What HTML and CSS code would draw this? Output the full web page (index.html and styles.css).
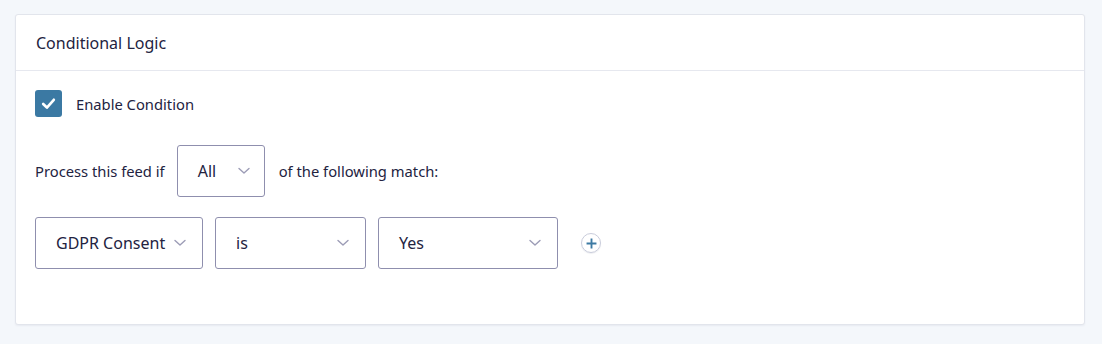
FILE: index.html
```html
<!DOCTYPE html>
<html>
<head>
<meta charset="utf-8">
<link rel="stylesheet" href="styles.css">
</head>
<body>
<div class="card">
  <div class="card-header">Conditional Logic</div>
  <div class="card-body">
    <label class="check-row">
      <span class="checkbox">
        <svg width="17" height="17" viewBox="0 0 16 16"><path d="M3 8.5 L6.5 11.8 L13 4.5" fill="none" stroke="#fff" stroke-width="2.5" stroke-linecap="round" stroke-linejoin="round"/></svg>
      </span>
      <span class="check-label">Enable Condition</span>
    </label>
    <div class="process-row">
      <span>Process this feed if</span>
      <div class="select sel-all"><span>All</span><svg class="chev" width="12" height="8" viewBox="0 0 12 8"><path d="M1 1.5 L6 6 L11 1.5" fill="none" stroke="#9c9cb6" stroke-width="1.4" stroke-linecap="round" stroke-linejoin="round"/></svg></div>
      <span>of the following match:</span>
    </div>
    <div class="rule-row">
      <div class="select sel-field"><span>GDPR Consent</span><svg class="chev" width="12" height="8" viewBox="0 0 12 8"><path d="M1 1.5 L6 6 L11 1.5" fill="none" stroke="#9c9cb6" stroke-width="1.4" stroke-linecap="round" stroke-linejoin="round"/></svg></div>
      <div class="select sel-op"><span>is</span><svg class="chev" width="12" height="8" viewBox="0 0 12 8"><path d="M1 1.5 L6 6 L11 1.5" fill="none" stroke="#9c9cb6" stroke-width="1.4" stroke-linecap="round" stroke-linejoin="round"/></svg></div>
      <div class="select sel-val"><span>Yes</span><svg class="chev" width="12" height="8" viewBox="0 0 12 8"><path d="M1 1.5 L6 6 L11 1.5" fill="none" stroke="#9c9cb6" stroke-width="1.4" stroke-linecap="round" stroke-linejoin="round"/></svg></div>
      <span class="add-btn">
        <svg width="11" height="11" viewBox="0 0 10 10"><path d="M5 0.5 V9.5 M0.5 5 H9.5" stroke="#3d7aa3" stroke-width="1.7"/></svg>
      </span>
    </div>
  </div>
</div>
</body>
</html>
```

FILE: styles.css
```css
html, body {
  margin: 0;
  padding: 0;
}
body {
  background: #f4f7fb;
  font-family: "Noto Sans", "Open Sans", sans-serif;
  color: #23233f;
  padding: 14px 17px 0 15px;
  height: 344px;
  box-sizing: border-box;
}
.card {
  background: #fff;
  border: 1px solid #e2e5ec;
  border-radius: 3px;
  height: 311px;
  box-sizing: border-box;
  box-shadow: 0 1px 2px rgba(30, 40, 80, 0.06);
}
.card-header {
  height: 56px;
  box-sizing: border-box;
  padding: 0 20px;
  display: flex;
  align-items: center;
  font-size: 16px;
  border-bottom: 1px solid #e6e8ef;
}
.card-body {
  padding: 19px 19px 0 19px;
}
.check-row {
  display: flex;
  align-items: center;
  gap: 14px;
  height: 27px;
}
.checkbox {
  width: 27px;
  height: 27px;
  border-radius: 3px;
  background: #3b79a3;
  display: flex;
  align-items: center;
  justify-content: center;
}
.check-label {
  font-size: 14.75px;
}
.process-row {
  margin-top: 28px;
  display: flex;
  align-items: center;
  gap: 12px;
  font-size: 14.75px;
}
.select {
  height: 52px;
  box-sizing: border-box;
  border: 1px solid #8f8fae;
  border-radius: 3px;
  display: flex;
  align-items: center;
  justify-content: space-between;
  padding: 0 16px 0 20px;
  font-size: 16px;
  background: #fff;
}
.sel-all { width: 88px; padding-right: 14px; margin-right: 2px; }
.sel-field { width: 168px; padding-right: 16px; }
.sel-op { width: 151px; }
.sel-val { width: 180px; }
.rule-row {
  margin-top: 20px;
  display: flex;
  align-items: center;
  gap: 12px;
}
.add-btn {
  margin-left: 11px;
  width: 20px;
  height: 20px;
  box-sizing: border-box;
  border: 1px solid #c9ccdb;
  border-radius: 50%;
  display: flex;
  align-items: center;
  justify-content: center;
  box-shadow: 0 1px 1px rgba(30, 40, 80, 0.08);
}
```
